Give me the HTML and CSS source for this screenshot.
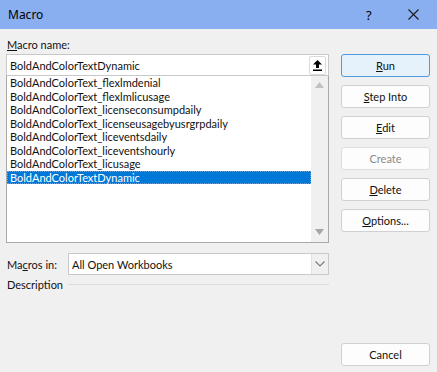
FILE: index.html
```html
<!DOCTYPE html>
<html lang="en">
<head>
  <meta charset="UTF-8">
  <meta name="viewport" content="width=device-width, initial-scale=1.0">
  <title>Macro</title>
  <link rel="stylesheet" href="styles.css">
</head>
<body>
  <div class="dialog">
    <div class="titlebar">
      <span class="title">Macro</span>
      <span class="help">?</span>
      <span class="close">
        <svg width="11" height="11" viewBox="0 0 11 11"><path d="M0.5 0.5 L10.5 10.5 M10.5 0.5 L0.5 10.5" stroke="#1a1a1a" stroke-width="1.1" fill="none"/></svg>
      </span>
    </div>

    <div class="content">
      <div class="main">
        <div class="field-label"><u>M</u>acro name:</div>
        <div class="name-box">
          <span class="name-value">BoldAndColorTextDynamic</span>
          <span class="upload-btn">
            <svg width="9" height="11" viewBox="0 0 9 11"><path d="M4.5 0 L9 4.5 L6 4.5 L6 8 L3 8 L3 4.5 L0 4.5 Z" fill="#000"/><rect x="0" y="9.5" width="9" height="1.5" fill="#000"/></svg>
          </span>
        </div>

        <div class="list">
          <ul class="items">
            <li>BoldAndColorText_flexlmdenial</li>
            <li>BoldAndColorText_flexlmlicusage</li>
            <li>BoldAndColorText_licenseconsumpdaily</li>
            <li>BoldAndColorText_licenseusagebyusrgrpdaily</li>
            <li>BoldAndColorText_liceventsdaily</li>
            <li>BoldAndColorText_liceventshourly</li>
            <li>BoldAndColorText_licusage</li>
            <li class="selected">BoldAndColorTextDynamic</li>
          </ul>
          <div class="scrollbar">
            <svg width="9" height="6" viewBox="0 0 9 6"><path d="M4.5 0 L9 6 L0 6 Z" fill="#c2c2c2"/></svg>
            <svg width="9" height="6" viewBox="0 0 9 6"><path d="M0 0 L9 0 L4.5 6 Z" fill="#a6a6a6"/></svg>
          </div>
        </div>

        <div class="macros-in">
          <span class="inline-label">Ma<u>c</u>ros in:</span>
          <div class="select">
            <span class="select-value">All Open Workbooks</span>
            <span class="select-arrow">
              <svg width="10" height="6" viewBox="0 0 10 6"><path d="M0.5 0.5 L5 5 L9.5 0.5" stroke="#7a7a7a" stroke-width="1.1" fill="none"/></svg>
            </span>
          </div>
        </div>

        <div class="desc">
          <span>Description</span>
          <span class="rule"></span>
        </div>
      </div>

      <div class="buttons">
        <button class="btn default"><u>R</u>un</button>
        <button class="btn"><u>S</u>tep Into</button>
        <button class="btn"><u>E</u>dit</button>
        <button class="btn disabled">Create</button>
        <button class="btn"><u>D</u>elete</button>
        <button class="btn"><u>O</u>ptions...</button>
        <button class="btn cancel">Cancel</button>
      </div>
    </div>
  </div>
</body>
</html>
```

FILE: styles.css
```css
body {
  margin: 0;
  padding: 0;
  font-family: Lato, "Noto Sans", Arial, sans-serif;
  font-size: 11px;
  color: #111;
  background: #f0f0f0;
  overflow: hidden;
}

.dialog {
  width: 437px;
  height: 372px;
  display: flex;
  flex-direction: column;
  background: #f0f0f0;
}

.titlebar {
  height: 29px;
  flex-shrink: 0;
  display: flex;
  align-items: center;
  background: #8aaff0;
  padding-left: 8px;
}

.title {
  flex: 1;
  font-family: "Noto Sans", Arial, sans-serif;
  font-size: 12px;
  color: #000;
}

.help {
  width: 20px;
  font-family: "Noto Sans", Arial, sans-serif;
  font-size: 13px;
  color: #000;
  margin-right: 22px;
}

.close {
  display: flex;
  margin-right: 18px;
}

.content {
  flex: 1;
  display: flex;
  padding: 0 7px 6px 6px;
}

.main {
  width: 323px;
  display: flex;
  flex-direction: column;
}

.field-label {
  height: 16px;
  line-height: 16px;
  margin-top: 8px;
  padding-left: 1px;
}

.name-box {
  height: 20px;
  margin-top: 1px;
  display: flex;
  align-items: center;
  background: #fff;
  border: 1px solid #c8c8c8;
}

.name-value {
  flex: 1;
  padding-left: 3px;
}

.upload-btn {
  width: 15px;
  height: 17px;
  margin-right: 2px;
  display: flex;
  align-items: center;
  justify-content: center;
  border: 1px solid #dadada;
  border-radius: 2px;
}

.list {
  height: 166px;
  margin-top: -1px;
  display: flex;
  background: #fff;
  border: 1px solid #a9a9a9;
  border-top-color: #c8c8c8;
}

.items {
  flex: 1;
  list-style: none;
  margin: 0;
  padding: 0;
}

.items li {
  height: 13.5px;
  line-height: 13.5px;
  padding-left: 3px;
  white-space: nowrap;
}

.items li.selected {
  background: #0078d7;
  color: #fff;
  outline: 1px dotted #6ba4dc;
  outline-offset: -1px;
}

.scrollbar {
  width: 17px;
  background: #f0f0f0;
  display: flex;
  flex-direction: column;
  justify-content: space-between;
  align-items: center;
  padding: 6px 0 7px;
}

.macros-in {
  display: flex;
  align-items: center;
  margin-top: 10px;
}

.inline-label {
  width: 61px;
  padding-left: 1px;
}

.select {
  flex: 1;
  height: 20px;
  display: flex;
  align-items: center;
  background: #fff;
  border: 1px solid #c8c8c8;
}

.select-value {
  flex: 1;
  padding-left: 3px;
}

.select-arrow {
  width: 16px;
  height: 20px;
  display: flex;
  align-items: center;
  justify-content: center;
  background: #f0f0f0;
  border-left: 1px solid #e2e2e2;
}

.desc {
  display: flex;
  align-items: center;
  margin-top: 3px;
  padding-left: 1px;
}

.rule {
  flex: 1;
  height: 1px;
  background: #dcdcdc;
  margin-left: 5px;
}

.buttons {
  margin-left: 12px;
  width: 89px;
  display: flex;
  flex-direction: column;
  gap: 8px;
  padding-top: 25px;
}

.btn {
  height: 23px;
  padding: 0;
  font-family: inherit;
  font-size: 11px;
  color: #111;
  background: #fdfdfd;
  border: 1px solid #d0d0d0;
  border-radius: 3px;
}

.btn.default {
  background: #e5f1fb;
  border-color: #4c9be0;
}

.btn.disabled {
  color: #8a8a8a;
  border-color: #dedede;
}

.btn.cancel {
  margin-top: auto;
}
```
